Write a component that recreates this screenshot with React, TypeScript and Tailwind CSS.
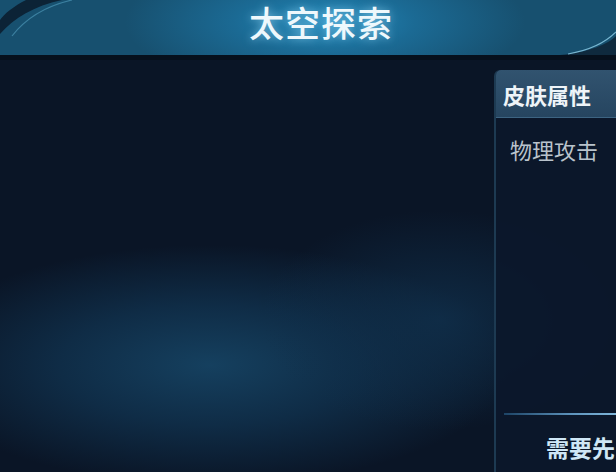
export default function App() {
  return (
    <div
      className="relative flex h-[472px] w-[616px] flex-col overflow-hidden bg-[#0a1526]"
      style={{ fontFamily: '"Noto Sans CJK SC", "Noto Sans", sans-serif' }}
    >
      {/* nebula glow behind the content */}
      <div className="pointer-events-none absolute inset-0 bg-[radial-gradient(ellipse_300px_120px_at_210px_365px,#15405f_0%,#0f2c46_50%,transparent_100%)]" />
      <div className="pointer-events-none absolute inset-0 bg-[radial-gradient(ellipse_180px_110px_at_440px_320px,#10304c_0%,transparent_100%)] opacity-80" />

      {/* title bar */}
      <header className="relative z-10 flex h-[55px] shrink-0 items-start justify-center bg-[#17506f] pl-[26px]">
        <div className="absolute inset-0 bg-[radial-gradient(ellipse_200px_70px_at_325px_22px,#2389bb_0%,#1b6a94_45%,transparent_100%)]" />
        {/* corner swooshes */}
        <svg className="absolute inset-0" width="616" height="55" viewBox="0 0 616 55">
          <path d="M0 34 C 14 18, 34 6, 62 0 L 26 0 C 14 6, 4 14, 0 20 Z" fill="#0c2336" />
          <path d="M12 36 C 26 18, 46 6, 72 0" stroke="#5aa7c8" strokeOpacity="0.55" strokeWidth="1.2" fill="none" />
          <path d="M560 55 C 590 52, 608 44, 616 36 L 616 55 Z" fill="#0f2a3e" />
          <path d="M568 54 C 592 50, 606 42, 616 32" stroke="#8fd0ea" strokeOpacity="0.8" strokeWidth="1.2" fill="none" />
        </svg>
        <h1 className="relative text-[35px] font-medium leading-[44px] tracking-[1px] text-[#eef8fc] [text-shadow:0_0_8px_rgba(170,230,255,0.6)]">
          太空探索
        </h1>
      </header>
      <div className="relative z-10 h-[5px] shrink-0 bg-[#06101c]" />

      <main className="relative z-10 flex flex-1 pt-[10px]">
        <section className="flex-1" />

        {/* skin stats panel */}
        <aside className="flex w-[122px] flex-col rounded-tl-[6px] border-l-2 border-[#1d3a52] bg-[#0b172b]/90">
          <div className="flex h-[48px] items-center rounded-tl-[5px] border-b border-[#3d6482] bg-[linear-gradient(180deg,#31536f,#264560)] pl-[7px] text-[22px] font-bold leading-none text-[#eef4f8]">
            皮肤属性
          </div>
          <div className="pl-[14px] pt-[20px] text-[22px] leading-none text-[#b9c3cc]">物理攻击</div>
          <div className="flex-1" />
          <div className="ml-[8px] h-[2px] bg-[linear-gradient(90deg,#1d4466,#5d93bc_60%,#7fb6da)]" />
          <div className="pb-[13px] pl-[50px] pt-[21px] text-[23px] font-bold leading-none whitespace-nowrap text-[#cfe7f6]">
            需要先
          </div>
        </aside>
      </main>
    </div>
  )
}
